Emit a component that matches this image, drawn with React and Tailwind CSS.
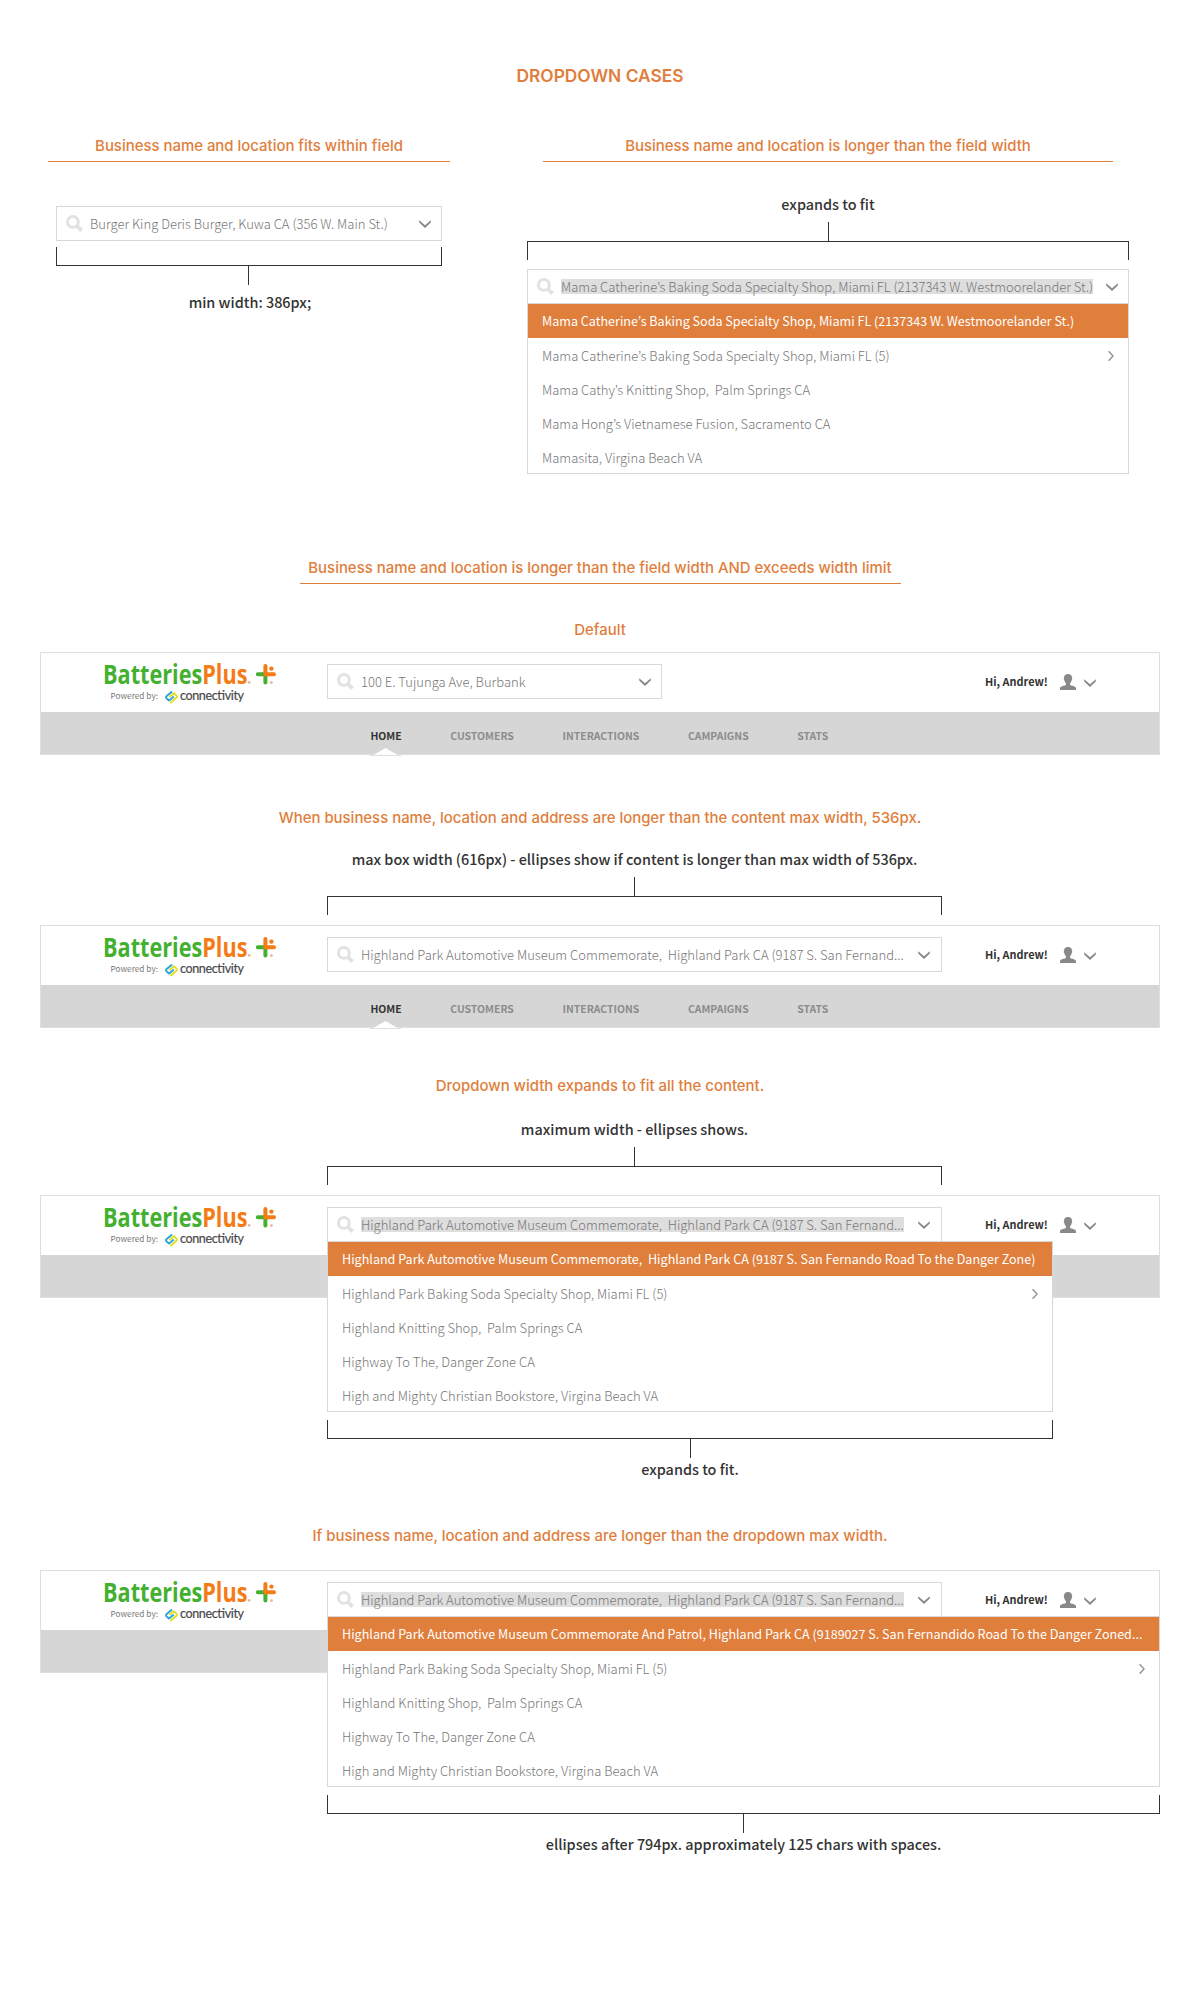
import React from 'react';

const HIGHLAND =
  'Highland Park Automotive Museum Commemorate,  Highland Park CA (9187 S. San Fernand...';

const MAMA_OPTIONS = [
  'Mama Catherine’s Baking Soda Specialty Shop, Miami FL (2137343 W. Westmoorelander St.)',
  'Mama Catherine’s Baking Soda Specialty Shop, Miami FL (5)',
  'Mama Cathy’s Knitting Shop,  Palm Springs CA',
  'Mama Hong’s Vietnamese Fusion, Sacramento CA',
  'Mamasita, Virgina Beach VA',
];

const HIGHLAND_REST = [
  'Highland Park Baking Soda Specialty Shop, Miami FL (5)',
  'Highland Knitting Shop,  Palm Springs CA',
  'Highway To The, Danger Zone CA',
  'High and Mighty Christian Bookstore, Virgina Beach VA',
];

function SearchIcon() {
  return (
    <svg className="h-[17px] w-[17px] shrink-0" viewBox="0 0 17 17" fill="none" stroke="#e2e2e2">
      <circle cx="6.9" cy="6.9" r="5.4" strokeWidth="3" />
      <path d="M10.8 10.8 L15.6 15.6" strokeWidth="3.9" />
    </svg>
  );
}

function ChevronDown() {
  return (
    <svg className="h-2 w-3 shrink-0" viewBox="0 0 12 8" fill="#888888">
      <path d="M0.2 0.2 L6 5.3 L11.8 0.2 V2.6 L6 8 L0.2 2.6 Z" />
    </svg>
  );
}

function ChevronRight() {
  return (
    <svg className="h-[10px] w-[6px] shrink-0" viewBox="0 0 6 10" fill="none" stroke="#999999">
      <path d="M0.6 0.2 L5 5 L0.6 9.8" strokeWidth="1.5" />
    </svg>
  );
}

function UserIcon() {
  return (
    <svg className="h-4 w-4 shrink-0" viewBox="0 0 16 16" fill="#888888">
      <path d="M8 0 C10.6 0 12 1.4 12 4 C12.4 4.2 12.3 5.6 11.7 6 C11.4 7.6 10.9 8.4 10.1 9.2 V10.8 C10.6 12 16 12 16 14.2 V16 H0 V14.2 C0 12 5.4 12 5.9 10.8 V9.2 C5.1 8.4 4.6 7.6 4.3 6 C3.7 5.6 3.6 4.2 4 4 C4 1.4 5.4 0 8 0 Z" />
    </svg>
  );
}

function Logo() {
  return (
    <svg className="h-[52px] w-[176px] shrink-0 overflow-visible" viewBox="0 0 176 52">
      <text x="-1" y="23.7" textLength="144.5" lengthAdjust="spacingAndGlyphs" fill="#43b02f" className="font-['Open_Sans'] text-[26.5px] font-bold">
        Batteries<tspan fill="#f47b16">Plus</tspan>
      </text>
      <circle cx="145.2" cy="22.4" r="1.3" fill="#e2b98a" />
      <g fill="none" strokeWidth="4" strokeLinecap="round">
        <path d="M153.8 14.2 H161.4 V22.4" stroke="#43b02f" />
        <path d="M161.4 6 V14.2 H170" stroke="#f47b16" />
      </g>
      <circle cx="167.4" cy="8.6" r="2.2" fill="#f47b16" />
      <circle cx="167.4" cy="22.6" r="1.4" fill="#e2b98a" />
      <text x="6.5" y="39.4" textLength="47.5" fill="#777777" className="font-['Noto_Sans_CJK_KR'] text-[8.2px]">Powered by:</text>
      <g fill="none" strokeWidth="1.9" strokeLinecap="round" strokeLinejoin="round">
        <path d="M67.5 32 L62.4 36.2 Q61.4 37.4 62.6 38.6 L65 40.6 L69.2 37" stroke="#2aa3dc" />
        <path d="M66.8 42.4 L72.4 37.8 Q73.6 36.6 72.2 35.4 L69.9 33.2 L66 36.5" stroke="#dfe021" />
      </g>
      <text x="76" y="39.7" textLength="64" fill="#4a4a4a" stroke="#4a4a4a" strokeWidth="0.2" className="font-['Lato'] text-[12.6px]">connectivity</text>
    </svg>
  );
}

function Heading({ children, className = '' }) {
  return (
    <h2 className={`text-center font-['Inter'] text-[14.93px] leading-5 font-medium whitespace-nowrap text-[#e07e3c] ${className}`}>
      {children}
    </h2>
  );
}

function Note({ children, className = '' }) {
  return (
    <p className={`text-center text-[14.42px] leading-5 font-medium whitespace-nowrap text-[#333333] ${className}`}>
      {children}
    </p>
  );
}

function Stem({ className = '' }) {
  return <div className={`mx-auto h-[19px] w-px bg-[#333333] ${className}`} />;
}

function BracketDown() {
  return (
    <>
      <Stem />
      <div className="h-[19px] border-x border-t border-[#333333]" />
    </>
  );
}

function BracketUp() {
  return (
    <>
      <div className="h-[19px] border-x border-b border-[#333333]" />
      <Stem />
    </>
  );
}

function Field({ value, selected = false, className = '' }) {
  return (
    <div className={`flex h-[35px] items-center border border-[#d8d8d8] bg-white pl-[9px] ${className}`}>
      <SearchIcon />
      <span className={`ml-[7px] h-[15px] text-[13.02px] leading-[15px] font-light whitespace-pre text-[#777777] ${selected ? 'bg-[#dedede]' : ''}`}>
        {value}
      </span>
      <span className="ml-auto pt-px">
        <ChevronDown />
      </span>
    </div>
  );
}

function Menu({ options, className = '' }) {
  return (
    <ul className={`relative -mt-px h-[171px] border border-[#d8d8d8] bg-white ${className}`}>
      {options.map((option, i) => (
        <li
          key={option}
          className={`flex h-[34px] items-center justify-between pt-px pr-[14px] pl-[14px] whitespace-pre ${i === 0 ? 'bg-[#e07e3c] text-[12.57px] font-normal text-white' : 'text-[13.02px] font-light text-[#777777]'}`}
        >
          <span>{option}</span>
          {i === 1 && <ChevronRight />}
        </li>
      ))}
    </ul>
  );
}

function Nav() {
  return (
    <nav className="flex gap-[48.6px] pt-4 pl-[329.4px] text-[10.45px] leading-4 font-bold text-[#8c8c8c]">
      <span className="relative text-[#333333]">
        HOME
        <svg className="absolute top-5 left-0 h-2 w-[31px]" viewBox="0 0 31 8">
          <path d="M3.5 7 L15.5 0 L27.5 7 Z" fill="#ffffff" />
          <rect y="7" width="31" height="1" fill="#dedede" />
        </svg>
      </span>
      <span>CUSTOMERS</span>
      <span>INTERACTIONS</span>
      <span>CAMPAIGNS</span>
      <span>STATS</span>
    </nav>
  );
}

function AppHeader({ fieldClass, value, options, menuClass }) {
  return (
    <header className="mx-10 h-[103px] border border-[#dedede] bg-white">
      <div className="flex h-[59px] items-start">
        <div className="ml-[63px] w-[223px] pt-[7px]">
          <Logo />
        </div>
        <div className="h-[35px] w-[616px] pt-[11px]">
          <Field value={value} selected={!!options} className={fieldClass} />
          {options && <Menu options={options} className={menuClass} />}
        </div>
        <div className="ml-[42px] flex h-[59px] items-center">
          <span className="-mt-0.5 w-[75px] text-[10.9px] font-bold whitespace-nowrap text-[#333333]">Hi, Andrew!</span>
          <span className="-mt-px"><UserIcon /></span>
          <span className="ml-[7.5px]"><ChevronDown /></span>
        </div>
      </div>
      <div className="h-[42px] bg-[#d6d6d6]">{!options && <Nav />}</div>
    </header>
  );
}

export default function App() {
  return (
    <main className="h-[2000px] w-[1200px] overflow-hidden bg-white pt-16 font-['Noto_Sans_CJK_KR','Noto_Sans',sans-serif]">
      <h1 className="text-center font-['Inter'] text-[17.35px] leading-6 font-semibold text-[#e07e3c]">DROPDOWN CASES</h1>

      <section className="mt-12 flex h-[338px] items-start">
        <div className="ml-12 w-[402px]">
          <Heading className="h-[26px] border-b border-[#e07e3c]">Business name and location fits within field</Heading>
          <div className="mx-2 mt-11">
            <Field className="pr-[10px]" value="Burger King Deris Burger, Kuwa CA (356 W. Main St.)" />
            <div className="mt-1.5 h-[19px] border-x border-b border-[#333333]" />
            <Stem className="-translate-x-px" />
            <Note className="mt-[7px] pl-0.5">min width: 386px;</Note>
          </div>
        </div>
        <div className="ml-[77px] w-[602px]">
          <Heading className="mx-4 h-[26px] border-b border-[#e07e3c]">Business name and location is longer than the field width</Heading>
          <Note className="mt-8 mb-2">expands to fit</Note>
          <BracketDown />
          <Field className="mt-[9px] pr-[10px]" value={MAMA_OPTIONS[0]} selected />
          <Menu options={MAMA_OPTIONS} />
        </div>
      </section>

      <Heading className="mx-auto mt-[84px] h-[26px] w-[601px] border-b border-[#e07e3c]">
        Business name and location is longer than the field width AND exceeds width limit
      </Heading>
      <Heading className="mt-9 mb-3">Default</Heading>
      <AppHeader fieldClass="w-[335px] pr-[10.5px]" value="100 E. Tujunga Ave, Burbank" />

      <Heading className="mt-[53px]">
        When business name, location and address are longer than the content max width, 536px.
      </Heading>
      <div className="mt-[21px] mb-[10px] ml-[327px] w-[615px]">
        <Note className="mb-2">max box width (616px) - ellipses show if content is longer than max width of 536px.</Note>
        <BracketDown />
      </div>
      <AppHeader fieldClass="w-[615px] pr-[11.5px]" value={HIGHLAND} />

      <Heading className="mt-12">Dropdown width expands to fit all the content.</Heading>
      <div className="mt-[23px] mb-[10px] ml-[327px] w-[615px]">
        <Note className="mb-2">maximum width - ellipses shows.</Note>
        <BracketDown />
      </div>
      <AppHeader
        fieldClass="w-[615px] pr-[11.5px]"
        value={HIGHLAND}
        menuClass="w-[726px]"
        options={[
          'Highland Park Automotive Museum Commemorate,  Highland Park CA (9187 S. San Fernando Road To the Danger Zone)',
          ...HIGHLAND_REST,
        ]}
      />
      <div className="mt-[122px] ml-[327px] w-[726px]">
        <BracketUp />
        <Note className="mt-px">expands to fit.</Note>
      </div>

      <Heading className="mt-[47px] mb-6">
        If business name, location and address are longer than the dropdown max width.
      </Heading>
      <AppHeader
        fieldClass="w-[615px] pr-[11.5px]"
        value={HIGHLAND}
        menuClass="w-[833px]"
        options={[
          'Highland Park Automotive Museum Commemorate And Patrol, Highland Park CA (9189027 S. San Fernandido Road To the Danger Zoned...',
          ...HIGHLAND_REST,
        ]}
      />
      <div className="mt-[122px] ml-[327px] w-[833px]">
        <BracketUp />
        <Note className="mt-px">ellipses after 794px. approximately 125 chars with spaces.</Note>
      </div>
    </main>
  );
}
